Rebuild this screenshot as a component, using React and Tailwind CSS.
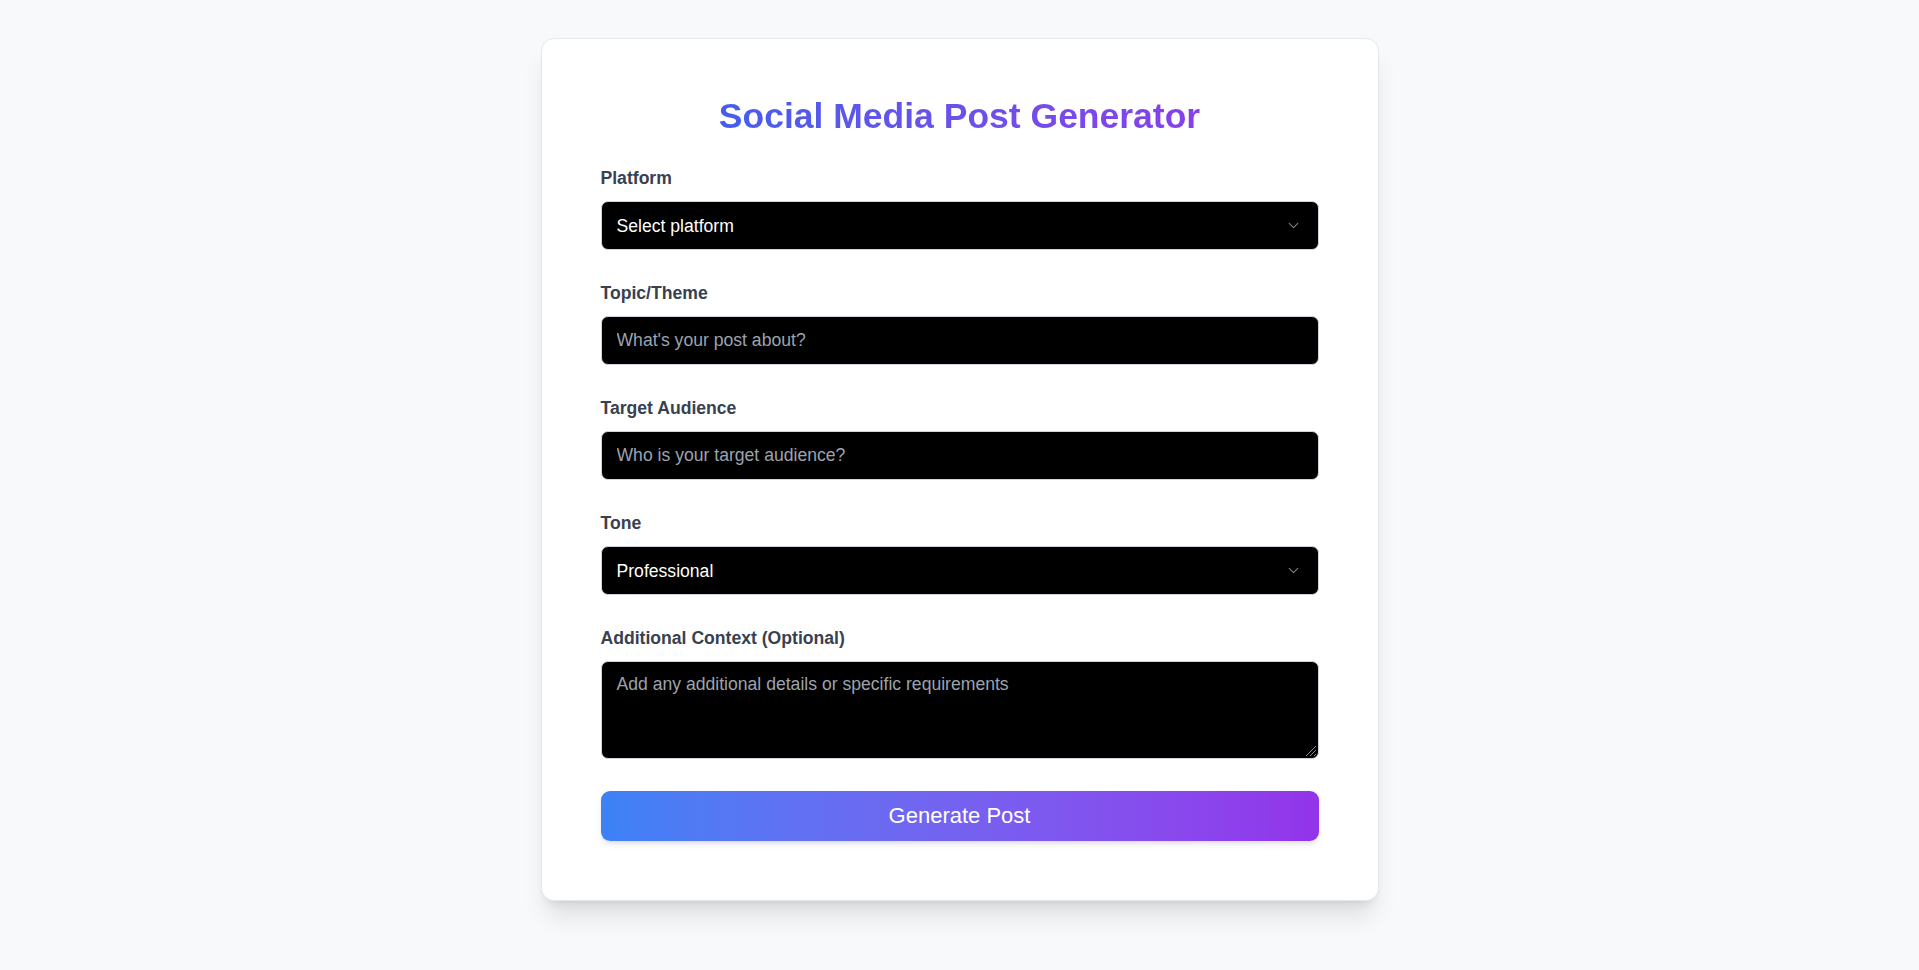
import React from "react";
import { ChevronDown } from "lucide-react";

function Label({ children }) {
  return (
    <div className="text-[17.6px] leading-[22px] font-bold text-[#374151] mb-[12px]">
      {children}
    </div>
  );
}

function SelectBox({ value }) {
  return (
    <div className="h-[49px] w-full rounded-[7px] border border-[#d1d5db] bg-black flex items-center justify-between pl-[15px] pr-[16px]">
      <span className="text-white text-[17.6px] leading-[24px]">{value}</span>
      <ChevronDown size={17} className="text-white opacity-50" strokeWidth={1.6} />
    </div>
  );
}

function TextInput({ placeholder }) {
  return (
    <input
      readOnly
      placeholder={placeholder}
      className="block h-[49px] w-full rounded-[7px] border border-[#d1d5db] bg-black px-[15px] text-white text-[17.6px] leading-[24px] outline-none placeholder:text-[#9ca3af]"
    />
  );
}

export default function App() {
  return (
    <div
      className="min-h-screen w-full bg-[#f8f9fb] pt-[38px] pb-[60px]"
      style={{ fontFamily: '"Liberation Sans", Arial, sans-serif' }}
    >
      <div className="mx-auto w-[838px] rounded-[13px] border border-[#e5e7eb] bg-white px-[59px] pt-[57px] pb-[59px] shadow-xl">
        <h1 className="text-center text-[35.5px] leading-[40px] font-bold mb-[31px]">
          <span className="bg-gradient-to-r from-[#2563eb] to-[#9333ea] bg-clip-text text-transparent block">
            Social Media Post Generator
          </span>
        </h1>
        <div className="flex flex-col gap-8">
          <div>
            <Label>Platform</Label>
            <SelectBox value="Select platform" />
          </div>
          <div>
            <Label>Topic/Theme</Label>
            <TextInput placeholder="What's your post about?" />
          </div>
          <div>
            <Label>Target Audience</Label>
            <TextInput placeholder="Who is your target audience?" />
          </div>
          <div>
            <Label>Tone</Label>
            <SelectBox value="Professional" />
          </div>
          <div>
            <Label>Additional Context (Optional)</Label>
            <div className="relative">
              <textarea
                readOnly
                placeholder="Add any additional details or specific requirements"
                className="block h-[98px] w-full resize-none rounded-[7px] border border-[#d1d5db] bg-black px-[15px] py-[10px] text-white text-[17.6px] leading-[24px] outline-none placeholder:text-[#9ca3af]"
              />
              <svg
                className="absolute right-[2px] bottom-[2px]"
                width="14"
                height="14"
                viewBox="0 0 14 14"
              >
                <path d="M13 3 L3 13 M13 7 L7 13 M13 11 L11 13" stroke="#8a8a8a" strokeWidth="1" />
              </svg>
            </div>
          </div>
          <button className="h-[50px] w-full rounded-[9px] bg-gradient-to-r from-[#3b82f6] to-[#9333ea] text-white text-[22px] leading-[28px] shadow-md">
            Generate Post
          </button>
        </div>
      </div>
    </div>
  );
}
